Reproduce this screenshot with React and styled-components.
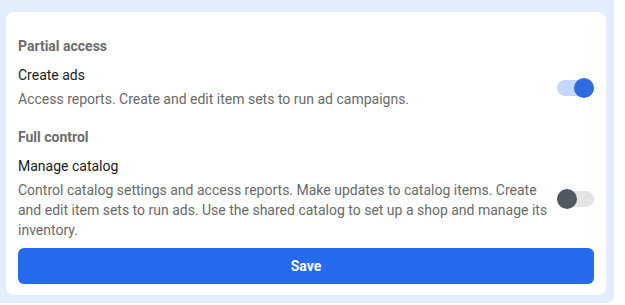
import React, { useState } from "react";
import styled, { createGlobalStyle } from "styled-components";

const Global = createGlobalStyle`
  html, body { margin: 0; padding: 0; background: #ffffff; }
  body { font-family: Roboto, "Noto Sans", Arial, sans-serif; }
`;

const Frame = styled.div`
  width: 614px;
  height: 303px;
  box-sizing: border-box;
  padding: 12px 8px 8px 6px;
  background: #e3eefd;
  border-radius: 0 0 8px 0;
`;

const Card = styled.div`
  height: 100%;
  box-sizing: border-box;
  background: #ffffff;
  border-radius: 8px;
  padding: 26px 12px 11px 12px;
  display: flex;
  flex-direction: column;
`;

const SectionTitle = styled.div`
  font-size: 14px;
  font-weight: 700;
  color: #6d6d6d;
  line-height: 16px;
  margin-bottom: 12px;
`;

const Row = styled.div`
  display: flex;
  align-items: center;
  gap: 8px;
  margin-bottom: ${(p) => p.$mb || 0}px;
`;

const Text = styled.div`
  flex: 1;
  min-width: 0;
`;

const Title = styled.div`
  font-size: 14px;
  color: #1c1c1c;
  line-height: 18px;
  margin-bottom: 5px;
`;

const Desc = styled.div`
  font-size: 14px;
  color: #6a6a6a;
  line-height: 20px;
`;

const Track = styled.button`
  flex: none;
  position: relative;
  width: 37px;
  height: 16px;
  border: none;
  padding: 0;
  border-radius: 8px;
  background: ${(p) => (p.$on ? "#c6d8fa" : "#e4e4e4")};
  cursor: pointer;
`;

const Knob = styled.span`
  position: absolute;
  top: -2px;
  left: ${(p) => (p.$on ? "17px" : "0px")};
  width: 20px;
  height: 20px;
  border-radius: 50%;
  background: ${(p) => (p.$on ? "#2f6be0" : "#525861")};
`;

const SaveButton = styled.button`
  margin-top: 8px;
  height: 36px;
  border: none;
  border-radius: 6px;
  background: #2569ed;
  color: #ffffff;
  font-family: Roboto, Arial, sans-serif;
  font-size: 14px;
  font-weight: 700;
  cursor: pointer;
`;

function Toggle({ on, onClick }) {
  return (
    <Track $on={on} onClick={onClick} aria-pressed={on}>
      <Knob $on={on} />
    </Track>
  );
}

export default function App() {
  const [ads, setAds] = useState(true);
  const [catalog, setCatalog] = useState(false);
  return (
    <>
      <Global />
      <Frame>
        <Card>
          <SectionTitle>Partial access</SectionTitle>
          <Row $mb={20}>
            <Text>
              <Title>Create ads</Title>
              <Desc>Access reports. Create and edit item sets to run ad campaigns.</Desc>
            </Text>
            <Toggle on={ads} onClick={() => setAds(!ads)} />
          </Row>
          <SectionTitle>Full control</SectionTitle>
          <Row>
            <Text>
              <Title>Manage catalog</Title>
              <Desc>
                Control catalog settings and access reports. Make updates to catalog items. Create
                and edit item sets to run ads. Use the shared catalog to set up a shop and manage its
                inventory.
              </Desc>
            </Text>
            <Toggle on={catalog} onClick={() => setCatalog(!catalog)} />
          </Row>
          <SaveButton>Save</SaveButton>
        </Card>
      </Frame>
    </>
  );
}
